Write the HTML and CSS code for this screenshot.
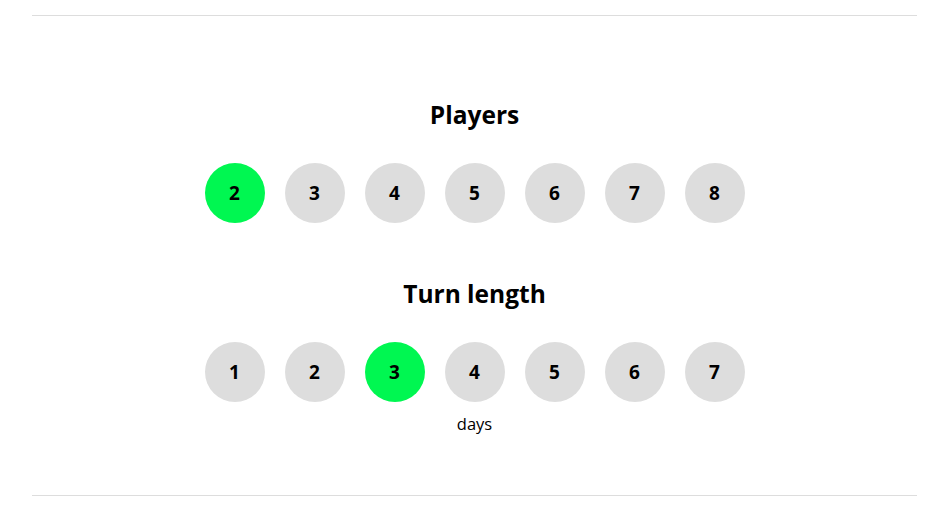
FILE: index.html
```html
<!DOCTYPE html>
<html>
<head>
<meta charset="utf-8">
<link rel="stylesheet" href="styles.css">
</head>
<body>
<div class="panel">
  <section class="group">
    <h2 class="title">Players</h2>
    <div class="options">
      <button class="opt active">2</button>
      <button class="opt">3</button>
      <button class="opt">4</button>
      <button class="opt">5</button>
      <button class="opt">6</button>
      <button class="opt">7</button>
      <button class="opt">8</button>
    </div>
  </section>
  <section class="group group-turn">
    <h2 class="title">Turn length</h2>
    <div class="options">
      <button class="opt">1</button>
      <button class="opt">2</button>
      <button class="opt active">3</button>
      <button class="opt">4</button>
      <button class="opt">5</button>
      <button class="opt">6</button>
      <button class="opt">7</button>
    </div>
    <div class="unit">days</div>
  </section>
</div>
</body>
</html>
```
FILE: styles.css
```css
html, body {
  margin: 0;
  padding: 0;
  background: #fff;
}
body {
  font-family: "Open Sans", "Noto Sans", sans-serif;
  color: #000;
}
.panel {
  margin: 15px 32px 0;
  border-top: 1px solid #dddddd;
  border-bottom: 1px solid #dddddd;
  padding: 84px 0 61px;
  display: flex;
  flex-direction: column;
  align-items: center;
}
.group {
  display: flex;
  flex-direction: column;
  align-items: center;
}
.group-turn {
  margin-top: 56px;
}
.title {
  margin: 0 0 33px;
  font-size: 24.5px;
  line-height: 30px;
  font-weight: 700;
}
.options {
  display: flex;
  gap: 20px;
}
.opt {
  width: 60px;
  height: 60px;
  border-radius: 50%;
  border: none;
  background: #dddddd;
  font-family: inherit;
  font-size: 19px;
  font-weight: 700;
  color: #000;
  padding: 0;
}
.opt.active {
  background: #00f751;
}
.unit {
  margin-top: 12px;
  font-size: 16.5px;
  line-height: 20px;
}
```
